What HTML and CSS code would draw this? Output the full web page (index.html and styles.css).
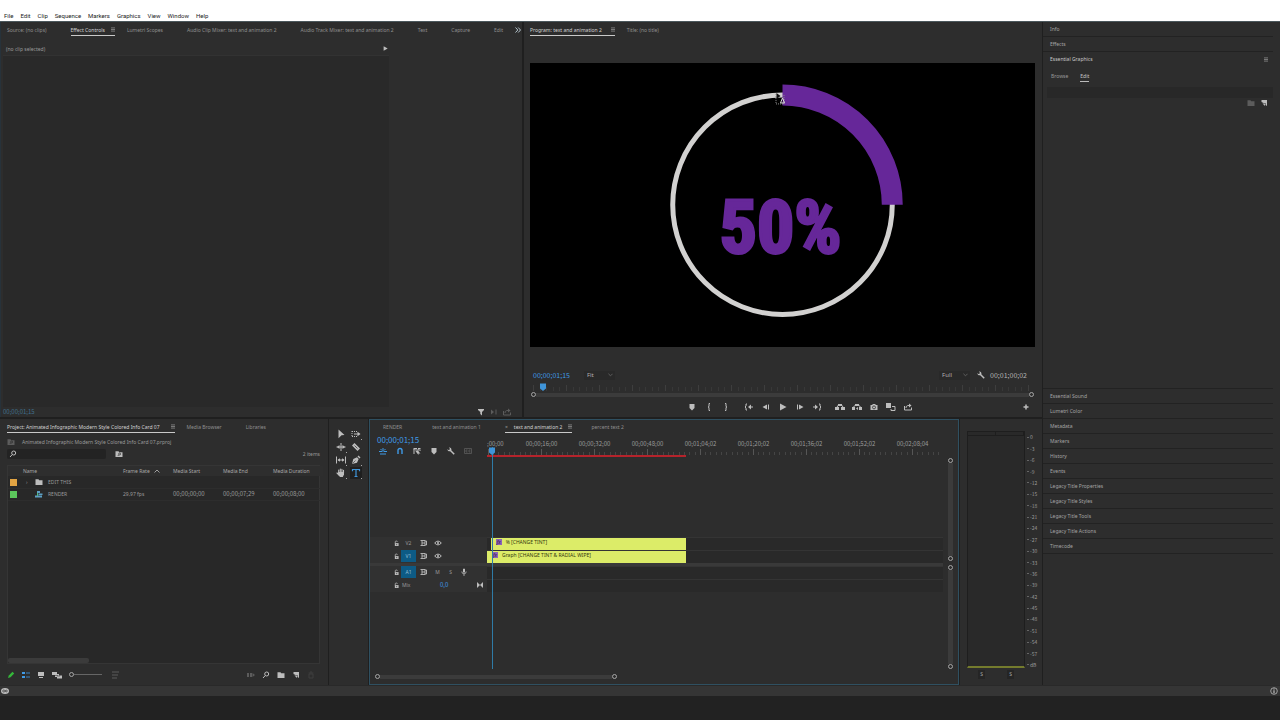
FILE: index.html
```html
<!DOCTYPE html>
<html lang="en">
<head>
<meta charset="utf-8">
<title>Video editor</title>
<link rel="stylesheet" href="styles.css">
</head>
<body>
<svg class="defs" aria-hidden="true">
  <symbol id="menu" viewBox="0 0 5 6"><path d="M0 1h5M0 3h5M0 5h5" stroke="currentColor"/></symbol>
  <symbol id="shield" viewBox="0 0 8 8"><path d="M1.500 1h5v4L4 7.400 1.500 5z" fill="currentColor"/></symbol>
  <symbol id="bigshield" viewBox="0 0 8 8"><path d="M1 .5h6v5L4 8 1 5.500z" fill="currentColor"/></symbol>
  <symbol id="lbrace" viewBox="0 0 8 8"><path d="M5 .5H4v3L3 4l1 .5v3h1" fill="none" stroke="currentColor"/></symbol>
  <symbol id="rbrace" viewBox="0 0 8 8"><path d="M3 .5h1v3L5 4l-1 .5v3H3" fill="none" stroke="currentColor"/></symbol>
  <symbol id="goin" viewBox="0 0 8 8"><path d="M2 1H1v2L0 4l1 1v2h1M4 4h4" fill="none" stroke="currentColor"/><path d="M6 1.500v5L3 4z" fill="currentColor"/></symbol>
  <symbol id="goout" viewBox="0 0 8 8"><path d="M6 1h1v2l1 1-1 1v2H6M0 4h4" fill="none" stroke="currentColor"/><path d="M2 1.500v5L5 4z" fill="currentColor"/></symbol>
  <symbol id="stepback" viewBox="0 0 8 8"><path d="M5 1.500v5L.5 4zM6 1.500h1v5H6z" fill="currentColor"/></symbol>
  <symbol id="stepfwd" viewBox="0 0 8 8"><path d="M3 1.500v5L7.500 4zM1 1.500h1v5H1z" fill="currentColor"/></symbol>
  <symbol id="play" viewBox="0 0 8 8"><path d="M1 .5v7L7.500 4z" fill="currentColor"/></symbol>
  <symbol id="lift" viewBox="0 0 10 8"><path d="M0 4h4v3H0zM6 4h4v3H6zM3 1h4v2H3z" fill="currentColor"/><path d="M2 4l1.500-2M8 4L6.500 2" stroke="currentColor"/></symbol>
  <symbol id="extract" viewBox="0 0 10 8"><path d="M0 4h3v3H0zM7 4h3v3H7zM3 1h4v2H3zM4 5.500L6 4v3z" fill="currentColor"/><path d="M1.500 4l2-2M8.500 4l-2-2" stroke="currentColor"/></symbol>
  <symbol id="camera" viewBox="0 0 8 8"><path d="M.5 2H2l1-1h2l1 1h1.500v5H.5z" fill="currentColor"/><circle cx="4" cy="4.400" r="1.500" fill="none" stroke="#2d2d2d" stroke-width=".8"/></symbol>
  <symbol id="compare" viewBox="0 0 10 8"><path d="M0 0h5v5H0z" fill="currentColor"/><path d="M6 3.500h3v4H5V6" fill="none" stroke="currentColor"/></symbol>
  <symbol id="export" viewBox="0 0 8 8"><path d="M.5 3v4h7V4.500M2 5c0-2 1-2.500 3-2.500" fill="none" stroke="currentColor"/><path d="M5 .5v4l2.500-2z" fill="currentColor"/></symbol>
  <symbol id="plus" viewBox="0 0 8 8"><path d="M4 1.500v5M1.500 4h5" stroke="currentColor" stroke-width="1.500"/></symbol>
  <symbol id="wrench" viewBox="0 0 8 8"><path d="M3.200 3.200l4 4" stroke="currentColor" stroke-width="1.500"/><path d="M1.800.5l1 1-.2 1.200-1.200.2-1-1C.4 3.600 1.800 4.800 3.400 4.200l1-1C4.800 1.600 3.500.1 1.800.5z" fill="currentColor"/></symbol>
  <symbol id="funnel" viewBox="0 0 8 8"><path d="M1 1h6v1L5 4v3.500L3.300 6V4L1 2z" fill="currentColor"/></symbol>
  <symbol id="skip" viewBox="0 0 8 8"><path d="M1 1.500v5L4 4zM5.500 1.500h1v5h-1z" fill="currentColor"/></symbol>
  <symbol id="folder" viewBox="0 0 8 8"><path d="M.5 1.300h3l.7 1h3.300v4.700h-7z" fill="currentColor"/></symbol>
  <symbol id="findbin" viewBox="0 0 8 8"><path d="M.5 1.300h3l.7 1h3.300v4.700h-7z" fill="currentColor"/><circle cx="4.600" cy="4" r="1" fill="none" stroke="#2d2d2d" stroke-width=".7"/><path d="M3.800 4.800L2.800 6" stroke="#2d2d2d" stroke-width=".7"/></symbol>
  <symbol id="search" viewBox="0 0 8 8"><circle cx="4.700" cy="3" r="2" fill="none" stroke="currentColor"/><path d="M3.300 4.500L1 7" stroke="currentColor"/></symbol>
  <symbol id="newitem" viewBox="0 0 8 8"><path d="M1.500 1h5.500v6L5.500 6V4H3.500L1.500 3z" fill="currentColor"/><path d="M2.500 4.500L5 7V4.500z" fill="currentColor"/></symbol>
  <symbol id="trash" viewBox="0 0 8 8"><path d="M1.500 2h5M3 1h2M2 3h4v4H2z" fill="none" stroke="currentColor"/></symbol>
  <symbol id="pencil" viewBox="0 0 8 8"><path d="M1 7l.8-2.500L5.500.8l1.700 1.700-3.700 3.700z" fill="currentColor"/></symbol>
  <symbol id="list" viewBox="0 0 8 8"><path d="M0 1h3v2H0zM0 5h3v2H0z" fill="currentColor"/><path d="M4 2h4M4 6h4" stroke="currentColor" stroke-width=".8"/></symbol>
  <symbol id="iconview" viewBox="0 0 8 8"><path d="M1 1h6v4H1z" fill="currentColor"/><path d="M2 6.500h4" stroke="currentColor"/></symbol>
  <symbol id="freeform" viewBox="0 0 10 8"><path d="M0 1h5v3H0zM3 3h4v3H3zM5 4.500h5v3H5z" fill="currentColor"/><path d="M3 4.500h3M5 5h3" stroke="#2d2d2d" stroke-width=".5"/></symbol>
  <symbol id="sort" viewBox="0 0 8 8"><path d="M0 1h7M0 4h6M0 7h5" stroke="currentColor"/></symbol>
  <symbol id="auto" viewBox="0 0 8 8"><path d="M0 2h2v4H0zM3 2h2v4H3zM5.500 2L8 4 5.500 6z" fill="currentColor"/></symbol>
  <symbol id="sequence" viewBox="0 0 8 8"><path d="M2 1h3v2H2zM3.500 3.500h4V5h-4zM0 5.500h7v2H0z" fill="currentColor"/><path d="M2.500 3v3" stroke="#4db87e"/></symbol>
  <symbol id="select" viewBox="0 0 10 10"><path d="M2.500.5l6 5.500-3 .2-3 3z" fill="currentColor"/></symbol>
  <symbol id="trackselect" viewBox="0 0 10 10"><path d="M1 2.500h6M1 7.500h5M1 2v6" fill="none" stroke="currentColor" stroke-dasharray="1 1"/><path d="M3 5h4" stroke="currentColor"/><path d="M6.500 2.800v4.400L9.500 5z" fill="currentColor"/></symbol>
  <symbol id="ripple" viewBox="0 0 10 10"><path d="M5 1v8M.5 5h9" stroke="currentColor"/><path d="M3.500 3v4L1 5zM6.500 3v4L9 5z" fill="currentColor"/></symbol>
  <symbol id="razor" viewBox="0 0 10 10"><path d="M1 3.500L3.500 1 9 6.500 6.500 9z" fill="currentColor"/><path d="M3.500 3.500l3 3" stroke="#2d2d2d" stroke-width=".7"/></symbol>
  <symbol id="slip" viewBox="0 0 10 10"><path d="M.5 1.500v7M9.500 1.500v7M2 5h6" stroke="currentColor"/><path d="M4 3.300v3.400L1.500 5zM6 3.300v3.400L8.500 5z" fill="currentColor"/></symbol>
  <symbol id="pen" viewBox="0 0 10 10"><path d="M1 9l1.300-5L6 2.300 7.700 4 6 7.700zM6.500 1.500l2 2L9.500 2.500 7.500.5z" fill="currentColor"/><path d="M1.500 8.500L4.500 5.500" stroke="#2d2d2d" stroke-width=".6"/></symbol>
  <symbol id="hand" viewBox="0 0 10 10"><path d="M2.700 5V2M4.300 4.500V1M5.900 4.500V1.300M7.500 5V2.300M1 5l2 2" stroke="currentColor" stroke-width="1.100" stroke-linecap="round"/><path d="M2.200 4h5.800v2.500L6.800 9H4L2 6.500z" fill="currentColor"/></symbol>
  <symbol id="type" viewBox="0 0 10 10"><path d="M1.500 3.300V1.500h7v1.800M5 1.500v7M3.500 8.500h3" fill="none" stroke="currentColor" stroke-width="1.200"/></symbol>
  <symbol id="nest" viewBox="0 0 8 8"><path d="M0 4.500h3M5 4.500h3M1 7h6M4 1v4M1.500 2L3 3.500M6.500 2L5 3.500" stroke="currentColor"/></symbol>
  <symbol id="magnet" viewBox="0 0 8 8"><path d="M2 7V3.500a2 2 0 0 1 4 0V7" fill="none" stroke="currentColor" stroke-width="1.400"/></symbol>
  <symbol id="linked" viewBox="0 0 8 8"><path d="M.5 1H4v1.500H.5zM5 1h2.500v1.500H5zM2 3.500h2.500l3 3H5.500V8z" fill="currentColor"/><path d="M1 2v5M6.500 3.500h1M5 5V2" stroke="currentColor"/></symbol>
  <symbol id="captions" viewBox="0 0 8 8"><path d="M.5 1.500h7v5h-7zM3.500 3H2v2h1.500M6.500 3H5v2h1.500" fill="none" stroke="currentColor" stroke-width=".8"/></symbol>
  <symbol id="lock" viewBox="0 0 6 8"><path d="M1 3.500h4.500V7H1z" fill="currentColor"/><path d="M1.500 4V2q0-1 1.300-1T4 2" fill="none" stroke="currentColor" stroke-width=".9"/><path d="M3.200 4.500v1.500" stroke="#2d2d2d" stroke-width=".8"/></symbol>
  <symbol id="sync" viewBox="0 0 8 8"><path d="M.5 1.500H5v5H.5M2 1.500v5M2 4h3M5 2h1.500v4H5" fill="none" stroke="currentColor" stroke-width=".9"/></symbol>
  <symbol id="eye" viewBox="0 0 8 8"><path d="M.7 4Q4 .2 7.300 4 4 7.800.7 4z" fill="none" stroke="currentColor"/><circle cx="4" cy="4" r="1" fill="currentColor"/></symbol>
  <symbol id="mic" viewBox="0 0 8 8"><path d="M3 1q1-1 2 0v3.500H3z" fill="currentColor"/><path d="M1.800 3.500q0 2.300 2.200 2.300t2.200-2.300M4 6v2" fill="none" stroke="currentColor" stroke-width=".8"/></symbol>
  <symbol id="keyframes" viewBox="0 0 8 8"><path d="M1 1.500h1v5H1zM6 1.500h1v5H6zM2 2l2 2-2 2zM6 2L4 4l2 2z" fill="currentColor"/></symbol>
  <symbol id="info" viewBox="0 0 8 8"><circle cx="4" cy="4" r="3.300" fill="none" stroke="currentColor" stroke-width=".8"/><path d="M4 1.500v1M4 3.300v3" stroke="currentColor" stroke-width="1.200"/></symbol>
  <symbol id="cloud" viewBox="0 0 8 8"><ellipse cx="4" cy="4" rx="4" ry="3" fill="currentColor"/><path d="M1.500 4a1.400 1.400 0 0 1 2.700 0 1.200 1.200 0 0 0 2.300 0 1.200 1.200 0 0 0-2.300 0 1.400 1.400 0 0 1-2.700 0" fill="none" stroke="#333" stroke-width=".7"/></symbol>
  <symbol id="chev" viewBox="0 0 6 4"><path d="M.5.5L3 3 5.500.5" fill="none" stroke="currentColor" stroke-width=".8"/></symbol>
  <symbol id="double" viewBox="0 0 6 6"><path d="M.5.500L2.800 3 .5 5.500M3.200.500L5.500 3 3.200 5.500" fill="none" stroke="currentColor"/></symbol>
  <pattern id="ticks" width="53" height="6" patternUnits="userSpaceOnUse"><path d="M1.500 0v6" stroke="#565656"/><path d="M6.500 3v3M11.500 3v3M17.500 3v3M22.500 3v3M27.500 3v3M33.500 3v3M38.500 3v3M43.500 3v3M49.500 3v3" stroke="#454545"/></pattern>
  <pattern id="fine" width="33" height="6" patternUnits="userSpaceOnUse"><path d="M3.500 0v6" stroke="#3e3e3e"/><path d="M10.500 2v4M16.500 2v4M23.500 2v4M29.500 2v4" stroke="#383838"/></pattern>
</svg>

<div class="app">
  <nav class="menubar">
    <button>File</button><button>Edit</button><button>Clip</button><button>Sequence</button><button>Markers</button><button>Graphics</button><button>View</button><button>Window</button><button>Help</button>
  </nav>

  <main class="workspace">
    <div class="left">
      <div class="upper">
        <section class="panel effect">
          <div class="tabs">
            <button class="tab">Source: (no clips)</button>
            <button class="tab active">Effect Controls<svg class="m"><use href="#menu"/></svg></button>
            <button class="tab">Lumetri Scopes</button>
            <button class="tab">Audio Clip Mixer: text and animation 2</button>
            <button class="tab">Audio Track Mixer: text and animation 2</button>
            <button class="tab">Text</button>
            <button class="tab">Capture</button>
            <button class="tab last-tab">Edit</button>
            <button class="more" aria-label="More panels"><svg><use href="#double"/></svg></button>
          </div>
          <div class="clipline"><span>(no clip selected)</span><svg class="i5"><use href="#play"/></svg></div>
          <div class="effectbody"></div>
          <div class="effectfoot"><span class="num dimblue">00;00;01;15</span>
            <div class="footicons"><svg class="i8"><use href="#funnel"/></svg><svg class="i8 faint"><use href="#skip"/></svg><svg class="i8 faint"><use href="#export"/></svg></div>
          </div>
        </section>

        <section class="panel program">
          <div class="tabs">
            <button class="tab active">Program: text and animation 2<svg class="m"><use href="#menu"/></svg></button>
            <button class="tab">Title: (no title)</button>
          </div>
          <div class="monitor">
            <svg viewBox="0 0 506 285" class="frame">
              <circle cx="253" cy="142" r="110" fill="none" stroke="#d2d1d0" stroke-width="5"/>
              <path d="M253 32a110 110 0 0 1 110 110" fill="none" stroke="#662799" stroke-width="21"/>
              <text x="251" y="190" text-anchor="middle" class="percent">50%</text>
              <path d="M246.500 31v10h8v-9" fill="none" stroke="#8f8f8f" stroke-dasharray="1 1"/>
              <path d="M247 30l4 3-4 3z" fill="#111"/>
              <path d="M251 40l2-5 2 5z" fill="none" stroke="#ddd"/>
            </svg>
          </div>
          <div class="readout">
            <span class="num blue tc">00;00;01;15</span>
            <label class="pick"><select aria-label="Zoom level"><option>Fit</option></select><svg><use href="#chev"/></svg></label>
            <label class="pick end"><select aria-label="Playback resolution"><option>Full</option></select><svg><use href="#chev"/></svg></label>
            <svg class="i8"><use href="#wrench"/></svg>
            <span class="num tc total">00;01;00;02</span>
          </div>
          <div class="scrub"><svg class="ruler"><rect width="100%" height="6" fill="url(#fine)"/></svg><svg class="head i8"><use href="#bigshield"/></svg></div>
          <div class="zoombar"><i class="knob"></i><i class="track"></i><i class="knob"></i></div>
          <div class="transport">
            <div class="grp first">
              <button aria-label="Add marker"><svg><use href="#shield"/></svg></button><button aria-label="Mark in"><svg><use href="#lbrace"/></svg></button><button aria-label="Mark out"><svg><use href="#rbrace"/></svg></button>
            </div>
            <div class="grp">
              <button aria-label="Go to in"><svg><use href="#goin"/></svg></button><button aria-label="Step back"><svg><use href="#stepback"/></svg></button><button aria-label="Play"><svg><use href="#play"/></svg></button><button aria-label="Step forward"><svg><use href="#stepfwd"/></svg></button><button aria-label="Go to out"><svg><use href="#goout"/></svg></button>
            </div>
            <div class="grp last">
              <button aria-label="Lift"><svg class="wide"><use href="#lift"/></svg></button><button aria-label="Extract"><svg class="wide"><use href="#extract"/></svg></button><button aria-label="Export frame"><svg><use href="#camera"/></svg></button><button aria-label="Comparison view"><svg class="wide"><use href="#compare"/></svg></button><button aria-label="Export"><svg><use href="#export"/></svg></button>
              <button class="add" aria-label="Button editor"><svg><use href="#plus"/></svg></button>
            </div>
          </div>
        </section>
      </div>

      <div class="lower">
        <section class="panel project">
          <div class="tabs">
            <button class="tab active">Project: Animated Infographic Modern Style Colored Info Card 07<svg class="m"><use href="#menu"/></svg></button>
            <button class="tab">Media Browser</button>
            <button class="tab">Libraries</button>
          </div>
          <div class="path"><svg class="i8 faint"><use href="#findbin"/></svg><span>Animated Infographic Modern Style Colored Info Card 07.prproj</span></div>
          <div class="find">
            <label class="searchbox"><svg class="i8"><use href="#search"/></svg><input type="text" aria-label="Search project"></label>
            <svg class="i8"><use href="#findbin"/></svg>
            <span class="count">2 items</span>
          </div>
          <div class="bin">
            <table>
              <thead><tr><th class="c0"></th><th class="c1">Name</th><th class="c2">Frame Rate <svg class="asc"><use href="#chev"/></svg></th><th class="c3">Media Start</th><th class="c3">Media End</th><th class="c3">Media Duration</th></tr></thead>
              <tbody>
                <tr><td><i class="sw orange"></i></td><td><span class="name"><b>›</b><svg class="i8"><use href="#folder"/></svg>EDIT THIS</span></td><td></td><td></td><td></td><td></td></tr>
                <tr><td><i class="sw green"></i></td><td><span class="name"><b></b><svg class="i8 seq"><use href="#sequence"/></svg>RENDER</span></td><td>29,97 fps</td><td class="num">00;00;00;00</td><td class="num">00;00;07;29</td><td class="num">00;00;08;00</td></tr>
              </tbody>
            </table>
            <div class="thumb"></div>
          </div>
          <div class="binfoot">
            <svg class="i8 lime"><use href="#pencil"/></svg><svg class="i8 blue"><use href="#list"/></svg><svg class="i8"><use href="#iconview"/></svg><svg class="i10"><use href="#freeform"/></svg>
            <div class="size"><i class="knob"></i><i class="line"></i></div>
            <svg class="i8 faint"><use href="#sort"/></svg>
            <svg class="i8 faint push"><use href="#auto"/></svg><svg class="i8"><use href="#search"/></svg><svg class="i8"><use href="#folder"/></svg><svg class="i8"><use href="#newitem"/></svg><svg class="i8 ghost"><use href="#trash"/></svg>
          </div>
        </section>

        <section class="panel tools">
          <button aria-label="Selection"><svg><use href="#select"/></svg></button><button class="sub" aria-label="Track select"><svg><use href="#trackselect"/></svg></button>
          <button class="sub" aria-label="Ripple edit"><svg><use href="#ripple"/></svg></button><button aria-label="Razor"><svg><use href="#razor"/></svg></button>
          <button class="sub" aria-label="Slip"><svg><use href="#slip"/></svg></button><button class="sub" aria-label="Pen"><svg><use href="#pen"/></svg></button>
          <button class="sub" aria-label="Hand"><svg><use href="#hand"/></svg></button><button class="sub on" aria-label="Type"><svg><use href="#type"/></svg></button>
        </section>

        <section class="panel timeline">
          <div class="tabs">
            <button class="tab">RENDER</button>
            <button class="tab">text and animation 1</button>
            <button class="tab active"><span class="x">×</span>text and animation 2<svg class="m"><use href="#menu"/></svg></button>
            <button class="tab">percent text 2</button>
          </div>
          <div class="tl">
            <div class="heads">
              <div class="num bigtc blue">00;00;01;15</div>
              <div class="tlicons"><svg class="blue"><use href="#nest"/></svg><svg class="blue"><use href="#magnet"/></svg><svg><use href="#linked"/></svg><svg><use href="#shield"/></svg><svg><use href="#wrench"/></svg><svg class="faint"><use href="#captions"/></svg></div>
              <div class="space"></div>
              <div class="hrow"><svg class="lk"><use href="#lock"/></svg><span class="id">V2</span><svg><use href="#sync"/></svg><svg><use href="#eye"/></svg></div>
              <div class="hrow"><svg class="lk"><use href="#lock"/></svg><span class="id on">V1</span><svg><use href="#sync"/></svg><svg><use href="#eye"/></svg></div>
              <div class="split"></div>
              <div class="hrow"><svg class="lk"><use href="#lock"/></svg><span class="id on">A1</span><svg><use href="#sync"/></svg><span class="ms">M</span><span class="ms">S</span><svg><use href="#mic"/></svg></div>
              <div class="hrow mix"><svg class="lk"><use href="#lock"/></svg><span class="mixname">Mix</span><span class="num blue zero">0,0</span><svg><use href="#keyframes"/></svg></div>
              <div class="rest"></div>
            </div>
            <div class="lanes">
              <div class="labels num"><span class="origin">;00;00</span><span>00;00;16;00</span><span>00;00;32;00</span><span>00;00;48;00</span><span>00;01;04;02</span><span>00;01;20;02</span><span>00;01;36;02</span><span>00;01;52;02</span><span>00;02;08;04</span></div>
              <svg class="ruler"><rect width="100%" height="6" fill="url(#ticks)"/></svg>
              <div class="render" style="width:43.6%"></div>
              <div class="space"></div>
              <div class="lane"><div class="clip" style="width:42.8%;margin-left:.8%"><i class="fx">fx</i>% [CHANGE TINT]</div></div>
              <div class="lane"><div class="clip" style="width:43.6%"><i class="fx">fx</i>Graph [CHANGE TINT &amp; RADIAL WIPE]</div></div>
              <div class="split"></div>
              <div class="lane"></div>
              <div class="lane"></div>
              <div class="rest"></div>
              <div class="playhead"><svg><use href="#bigshield"/></svg></div>
            </div>
            <div class="vbars">
              <div class="vbar top"><i class="knob"></i><i class="track"></i><i class="knob"></i></div>
              <div class="vbar bottom"><i class="knob"></i><i class="track"></i><i class="knob"></i></div>
            </div>
          </div>
          <div class="hbar"><i class="knob"></i><i class="track"></i><i class="knob"></i></div>
        </section>

        <section class="panel meters">
          <div class="meterrow">
            <div class="meter"><i></i><i></i></div>
            <div class="scale num"><span>0</span><span>-3</span><span>-6</span><span>-9</span><span>-12</span><span>-15</span><span>-18</span><span>-21</span><span>-24</span><span>-27</span><span>-30</span><span>-33</span><span>-36</span><span>-39</span><span>-42</span><span>-45</span><span>-48</span><span>-51</span><span>-54</span><span>-57</span><span>dB</span></div>
          </div>
          <div class="solo"><button>S</button><button>S</button></div>
        </section>
      </div>
    </div>

    <aside class="side">
      <button class="item">Info</button>
      <button class="item">Effects</button>
      <div class="graphics">
        <div class="gtitle"><span>Essential Graphics</span><svg class="m"><use href="#menu"/></svg></div>
        <div class="gtabs"><button>Browse</button><button class="sel">Edit</button></div>
        <div class="gbar"></div>
        <div class="gicons"><svg class="i8 faint"><use href="#folder"/></svg><svg class="i8"><use href="#newitem"/></svg></div>
      </div>
      <button class="item">Essential Sound</button>
      <button class="item">Lumetri Color</button>
      <button class="item">Metadata</button>
      <button class="item">Markers</button>
      <button class="item">History</button>
      <button class="item">Events</button>
      <button class="item">Legacy Title Properties</button>
      <button class="item">Legacy Title Styles</button>
      <button class="item">Legacy Title Tools</button>
      <button class="item">Legacy Title Actions</button>
      <button class="item">Timecode</button>
      <div class="tail"></div>
    </aside>
  </main>

  <footer class="status"><svg class="i8"><use href="#cloud"/></svg><svg class="i8"><use href="#info"/></svg></footer>
  <div class="under"></div>
</div>
</body>
</html>
```
FILE: styles.css
```css
* { box-sizing: border-box; }
body {
  margin: 0;
  background: #222;
  color: #9a9a9a;
  font: 5px/10px "Noto Sans", "Open Sans", sans-serif;
}
button, input, select {
  margin: 0; padding: 0; border: 0;
  background: none; color: inherit; font: inherit;
}
svg { display: block; flex: none; color: #bdbdbd; }
.defs { position: absolute; width: 0; height: 0; }
.num { font-family: "Noto Sans CJK SC", "Noto Sans", sans-serif; font-size: 6px; }
.i5 { width: 5px; height: 5px; }
.i8 { width: 8px; height: 8px; }
.i10 { width: 10px; height: 8px; }
.m { width: 4px; height: 5px; color: #8c8c8c; }
.blue { color: #3f9ae6; }
.dimblue { color: #41708c; }
.faint { color: #5c5c5c; }
.ghost { color: #3e3e3e; }
.lime { color: #35b83a; }

.app { display: flex; flex-direction: column; min-height: 100vh; }
.menubar {
  display: flex; align-items: flex-end; gap: 7px;
  height: 22px; padding: 0 4px;
  background: #fff; color: #222;
  font-family: Roboto, "Noto Sans", sans-serif; font-size: 6px;
  border-bottom: 1px solid #4b575c;
}
.menubar button { height: 10px; line-height: 10px; }
.workspace { flex: 1; display: grid; grid-template-columns: minmax(0, 1042fr) minmax(0, 237fr); background: #1f1f1f; gap: 1px; }
.left { display: flex; flex-direction: column; gap: 2px; }
.upper { flex: 396 1 0; display: grid; grid-template-columns: minmax(0, 522fr) minmax(0, 518fr); gap: 2px; }
.lower { flex: 266 1 0; display: grid; grid-template-columns: minmax(0, 328fr) minmax(0, 39fr) minmax(0, 590fr) minmax(0, 82fr); gap: 1px; }
.panel { display: flex; flex-direction: column; background: #2d2d2d; }

.tabs { display: flex; align-items: flex-start; gap: 12px; height: 16px; padding: 2px 3px 0 7px; white-space: nowrap; }
.tab { display: flex; align-items: center; gap: 6px; height: 12px; padding-right: 12px; color: #909090; }
.tab.active { padding-right: 0; color: #d2d2d2; border-bottom: 1px solid #c9c9c9; }

/* effect controls */
.effect { border-left: 1px solid #27323a; }
.effect .tabs { padding-left: 6px; }
.tab.last-tab { padding-right: 0; }
.more { display: grid; place-items: center; height: 12px; margin-left: auto; }
.more svg { width: 6px; height: 6px; color: #b5c5ce; }
.clipline { display: flex; justify-content: space-between; align-items: center; width: 75%; height: 17px; padding: 4px 4px 0 5px; }
.effectbody { flex: 1; width: 74%; margin-left: 2px; background: #292929; border-top: 1px solid #323232; }
.effectfoot { display: flex; justify-content: space-between; align-items: center; height: 10px; padding: 0 11px 0 2px; }
.footicons { display: flex; gap: 5px; }

/* program monitor */
.program .tabs { height: 41px; padding-left: 6px; }
.program .tab { gap: 9px; }
.monitor { flex: 285 1 0; margin: 0 7px 0 6px; background: #000; display: flex; min-height: 0; }
.frame { flex: 1; width: 100%; height: 100%; min-width: 0; }
.percent { fill: #662799; stroke: #662799; stroke-width: 3px; font: 700 74px "Roboto Condensed", "Open Sans Condensed", "Liberation Sans Narrow", "DejaVu Sans Condensed", sans-serif; }
.readout { display: flex; align-items: center; height: 12px; margin-top: 22px; padding: 0 15px 0 9px; }
.tc { font-size: 7px; }
.total { margin-left: 5px; color: #b4b4b4; }
.pick { display: flex; align-items: center; width: 31px; height: 9px; margin-left: 14px; padding: 0 2px 0 3px; background: #292929; }
.pick select { flex: 1; appearance: none; color: #b0b0b0; font-size: 6px; }
.pick svg { width: 5px; height: 4px; color: #777; }
.pick.end { margin-left: auto; margin-right: 7px; }
.scrub { position: relative; height: 9px; margin: 2px 7px 0 6px; padding-top: 2px; }
.ruler { width: 100%; height: 6px; }
.head { position: absolute; left: 9px; top: 0; color: #3f94d8; }
.zoombar, .hbar { display: flex; align-items: center; }
.zoombar { height: 5px; margin: 0 7px; padding-right: 1px; }
.knob { flex: none; width: 5px; height: 5px; border: 1px solid #a6a6a6; border-radius: 50%; }
.track { flex: 1; background: #3b3b3b; }
.zoombar .track, .hbar .track { height: 4px; }
.transport { display: grid; grid-template-columns: 1fr auto 1fr; height: 20px; align-items: center; }
.grp { display: flex; }
.grp button { display: grid; place-items: center; width: 17px; height: 12px; }
.grp svg { width: 8px; height: 8px; }
.grp svg.wide { width: 10px; }
.first { justify-content: flex-end; padding-right: 6px; }
.last { padding-left: 6px; }
.grp .add { margin-left: auto; margin-right: 8px; }

/* project */
.project { padding: 0 8px 0 7px; }
.project .tabs { padding: 2px 0 0; height: 17px; }
.project .tab.active { gap: 11px; }
.path { display: flex; gap: 7px; align-items: center; height: 11px; }
.find { display: flex; align-items: center; gap: 9px; height: 14px; }
.searchbox { display: flex; align-items: center; width: 99px; height: 10px; padding-left: 2px; background: #232323; border-radius: 2px; }
.searchbox input { flex: 1; min-width: 0; height: 10px; outline: 0; }
.count { margin-left: auto; }
.bin { flex: 1; display: flex; flex-direction: column; justify-content: space-between; margin-top: 4px; background: #282828; border: 1px solid #353535; }
table { width: 100%; table-layout: fixed; border-collapse: collapse; }
th { height: 10px; padding: 0; background: #2e2e2e; color: #a8a8a8; font-weight: 400; text-align: left; white-space: nowrap; }
td { height: 12px; padding: 0; border-bottom: 1px solid #2d2d2d; white-space: nowrap; }
.c0 { width: 15px; }
.c1 { width: 100px; }
.c2, .c3 { width: 50px; }
.asc { display: inline-block; width: 6px; height: 4px; margin-left: 3px; transform: rotate(180deg); }
.sw { display: block; width: 7px; height: 7px; margin-left: 2px; }
.orange { background: #e2a443; }
.green { background: #5cc75c; }
.name { display: flex; align-items: center; gap: 5px; }
.name b { width: 7px; padding-left: 3px; font-weight: 400; }
.seq { color: #5d9fc4; }
.thumb { width: 26%; height: 5px; border-radius: 2px; background: #3b3b3b; }
.binfoot { display: flex; align-items: center; gap: 7px; height: 21px; padding-right: 5px; }
.size { display: flex; align-items: center; width: 33px; margin-right: 3px; }
.line { flex: 1; height: 1px; background: #666; }
.push { margin-left: auto; }

/* tools */
.tools { display: grid; grid-template-columns: 15px 15px; grid-auto-rows: 12px; row-gap: 1px; align-content: start; padding: 9px 0 0 5px; }
.tools button { position: relative; display: grid; place-items: center; width: 12px; height: 12px; margin-left: 1px; }
.tools svg { width: 10px; height: 10px; }
.tools .sub::after { content: ""; position: absolute; right: 0; bottom: 0; width: 1px; height: 1px; background: #aaa; }
.tools .on { background: #1f1f1f; }
.tools .on svg { color: #3f94d8; }

/* timeline */
.timeline { border: 1px solid #2f5061; }
.timeline .tabs { gap: 19px; height: 14px; padding: 1px 0 0 13px; }
.timeline .tab { padding-right: 0; }
.timeline .tab:first-child { margin-right: 11px; }
.timeline .tab:nth-child(2) { margin-right: 5px; }
.x { width: 3px; color: #999; }
.tl { flex: 1; display: grid; grid-template-columns: 117px minmax(0, 1fr) 15px; }
.heads, .lanes, .vbars { display: flex; flex-direction: column; min-width: 0; }
.bigtc { height: 12px; padding-left: 7px; font-size: 8px; line-height: 12px; }
.tlicons { display: flex; gap: 9px; height: 10px; padding: 1px 9px; }
.tlicons svg { width: 8px; height: 8px; }
.space { flex: 83 1 0; }
.rest { flex: 80 1 0; }
.hrow { display: flex; align-items: center; gap: 6px; height: 13px; padding-left: 24px; background: #313131; }
.hrow svg { width: 8px; height: 8px; }
.hrow svg.lk { width: 5px; height: 7px; margin-right: -4px; }
.id { width: 15px; height: 12px; line-height: 12px; text-align: center; }
.hrow .id { margin-right: -2px; }
.id.on { background: #0d5b85; color: #93bfd5; }
.ms { width: 7px; text-align: center; }
.split { height: 3px; background: #393939; }
.mixname { width: 33px; padding-left: 1px; }
.zero { width: 30px; }
.lanes { position: relative; overflow: hidden; }
.labels { display: flex; height: 15px; padding-top: 5px; color: #9a9a9a; }
.labels span { flex: none; width: 53px; text-align: center; }
.labels .origin { width: 28px; text-align: left; }
.render { height: 2px; background: #b5232b; }
.lane { height: 13px; background: #292929; border-top: 1px solid #343434; }
.clip { display: flex; align-items: flex-start; gap: 4px; height: 12px; padding: 0 5px; background: #dcec68; color: #34380f; white-space: nowrap; line-height: 8px; }
.fx { width: 6px; height: 6px; margin-top: 1px; background: #8f65b5; color: #2c1740; line-height: 6px; text-align: center; }
.playhead { position: absolute; left: 5px; top: 13px; bottom: 0; width: 1px; background: #2f7ba6; }
.playhead svg { width: 8px; height: 8px; margin-left: -4px; color: #3f94d8; }
.vbars { padding-top: 24px; gap: 4px; align-items: center; }
.vbar { display: flex; flex-direction: column; align-items: center; }
.vbar .track { width: 5px; }
.top { flex: 104 1 0; }
.bottom { flex: 105 1 0; }
.hbar { width: 42%; height: 15px; padding-left: 5px; }

/* audio meters */
.meters { padding: 12px 2px 0 7px; }
.meterrow { flex: 1; display: flex; gap: 2px; }
.meter { flex: 1; display: flex; background: #292929; border: 1px solid #1e1e1e; border-bottom: 2px solid #747b2d; }
.meter i { flex: 1; height: 4px; border: solid #1e1e1e; border-width: 0 1px 1px 0; }
.scale { display: flex; flex-direction: column; justify-content: space-between; width: 13px; padding: 3px 0 0; font-size: 5px; line-height: 6px; }
.scale span { display: flex; align-items: center; gap: 1px; }
.scale span::before { content: ""; width: 2px; height: 1px; background: #666; }
.solo { display: flex; justify-content: space-around; width: 58px; height: 17px; padding-top: 2px; }
.solo button { width: 7px; height: 9px; line-height: 9px; background: #252525; color: #aaa; }

/* right column */
.side { display: flex; flex-direction: column; padding-right: 7px; background: #2d2d2d; }
.item { height: 15px; padding-left: 7px; text-align: left; border-bottom: 1px solid #222; color: #a4a4a4; }
.graphics { flex: 337 1 0; border-bottom: 1px solid #222; }
.gtitle { display: flex; justify-content: space-between; align-items: center; height: 14px; padding: 0 5px 0 7px; color: #c8c8c8; }
.gtabs { display: flex; gap: 12px; height: 20px; padding: 5px 0 0 8px; }
.gtabs button { height: 11px; border-bottom: 1px solid transparent; }
.gtabs .sel { color: #c8c8c8; border-color: #bbb; }
.gbar { height: 11px; margin: 1px 0 0 4px; background: #282828; }
.gicons { display: flex; justify-content: flex-end; gap: 5px; padding: 1px 5px; }
.tail { flex: 131 1 0; }

.status { display: flex; justify-content: space-between; align-items: center; height: 11px; padding: 0 2px 0 1px; background: #353535; border-top: 1px solid #292929; }
.under { height: 24px; }
```
